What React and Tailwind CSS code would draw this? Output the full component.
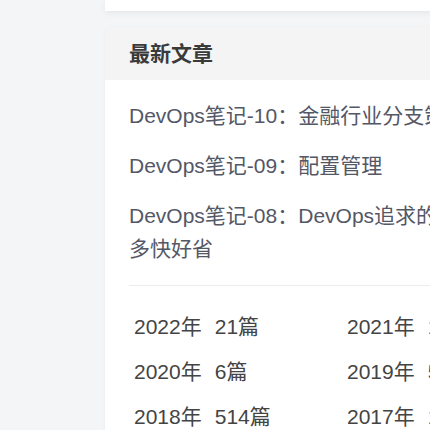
import React from 'react';

const posts = [
  'DevOps笔记-10：金融行业分支策略',
  'DevOps笔记-09：配置管理',
];

const years = [
  ['2022年', '21篇'],
  ['2021年', '14篇'],
  ['2020年', '6篇'],
  ['2019年', '538篇'],
  ['2018年', '514篇'],
  ['2017年', '115篇'],
];

const App = () => {
  return (
    <div
      className="w-[430px] h-[430px] overflow-hidden bg-[#f4f5f7] flex"
      style={{ fontFamily: '"Liberation Sans", "Noto Sans CJK SC", sans-serif' }}
    >
      {/* left gutter */}
      <div className="w-[105px] shrink-0" />

      <div className="flex-1 flex flex-col gap-4">
        {/* top card tail */}
        <div className="h-[11px] shrink-0 bg-white shadow-[0_2px_6px_rgba(0,0,0,0.06)]" />

        {/* latest posts card */}
        <div className="shrink-0 bg-white w-[420px] shadow-[0_1px_4px_rgba(0,0,0,0.04)]">
          <div className="h-[53px] bg-[#f4f4f4] px-6 flex items-center">
            <h3 className="text-[21px] font-bold text-[#3a3a3a]">最新文章</h3>
          </div>

          <div className="px-6 pt-[19px]">
            <ul className="flex flex-col gap-[17px]">
              {posts.map(title => (
                <li key={title} className="text-[21px] leading-[33px] text-[#545766] whitespace-nowrap">
                  {title}
                </li>
              ))}
              <li className="text-[21px] leading-[33px] text-[#545766] whitespace-nowrap">
                DevOps笔记-08：DevOps追求的是什么
                <br />
                多快好省
              </li>
            </ul>

            <div className="mt-[20px] h-px bg-[#ececec]" />

            <div className="grid grid-cols-[213px_213px] pl-[5px] pt-[18px]">
              {years.map(([y, n]) => (
                <div key={y} className="text-[21px] leading-[45px] text-[#444] whitespace-nowrap">
                  {y}
                  <span className="ml-[13px]">{n}</span>
                </div>
              ))}
            </div>
          </div>
        </div>
      </div>
    </div>
  );
};

export default App;
